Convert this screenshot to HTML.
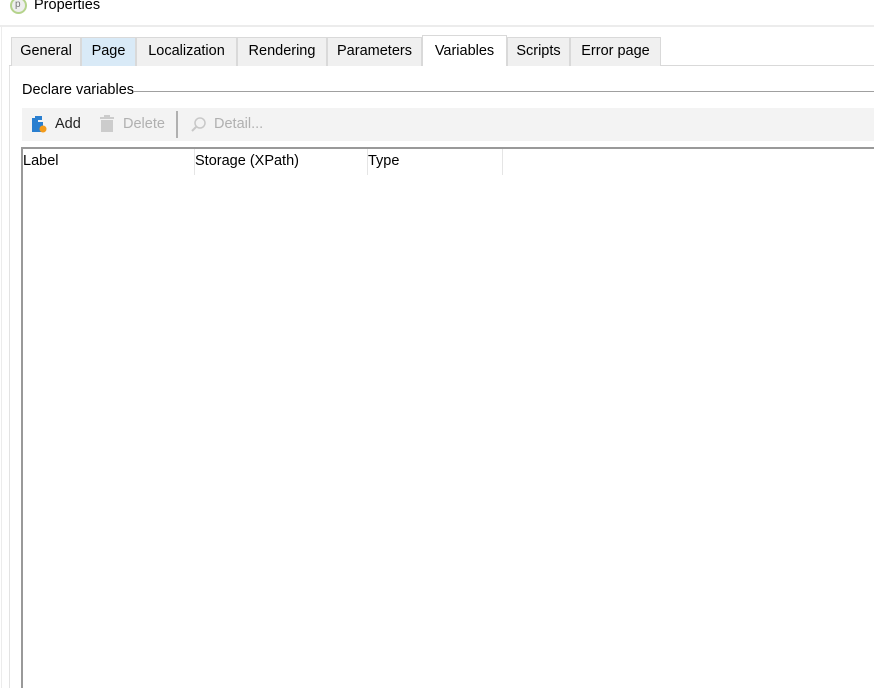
<!DOCTYPE html>
<html><head><style>
*{margin:0;padding:0;box-sizing:border-box}
body{width:874px;height:688px;background:#fff;font-family:"Liberation Sans",sans-serif;font-size:14.5px;color:#000;position:relative;overflow:hidden}
.a{position:absolute}
.tab{position:absolute;top:37px;height:29px;background:#f0f0f0;border:1px solid #d9d9d9;border-bottom:none;text-align:center;line-height:27px;font-size:14.5px}
</style></head><body>
<div class="a" style="left:10px;top:-3px;width:17px;height:17px;border-radius:50%;border:2px solid #b5d38c;background:#eee"></div>
<div class="a" style="left:15px;top:-1px;font-size:10px;color:#777">p</div>
<div class="a" style="left:34px;top:-3px">Properties</div>
<div class="a" style="left:0;top:25px;width:874px;height:2px;background:#ececec"></div>
<div class="a" style="left:1px;top:27px;width:1px;height:661px;background:#ececec"></div>
<div class="a" style="left:9px;top:65px;width:1px;height:623px;background:#e3e3e3"></div>
<div class="a" style="left:9px;top:65px;width:865px;height:1px;background:#d9d9d9"></div>
<div class="tab" style="left:11px;width:70px">General</div>
<div class="tab" style="left:81px;width:55px;background:#d9eaf7">Page</div>
<div class="tab" style="left:136px;width:101px">Localization</div>
<div class="tab" style="left:237px;width:90px">Rendering</div>
<div class="tab" style="left:327px;width:95px">Parameters</div>
<div class="tab" style="left:422px;top:35px;height:31px;width:85px;background:#fff;line-height:30px">Variables</div>
<div class="tab" style="left:507px;width:63px">Scripts</div>
<div class="tab" style="left:570px;width:91px">Error page</div>
<div class="a" style="left:22px;top:82px">Declare variables</div>
<div class="a" style="left:134px;top:91px;width:740px;height:1px;background:#a0a0a0"></div>
<div class="a" style="left:22px;top:108px;width:852px;height:33px;background:#f3f3f3"></div>
<svg class="a" style="left:30px;top:114px" width="20" height="20"><path d="M2 4h6v4h5v10H2z" fill="#2a7fd0"/><path d="M5 2h7v4H5z" fill="#2a7fd0"/><circle cx="13" cy="15" r="3.5" fill="#f39b1b"/></svg>
<div class="a" style="left:55px;top:116px;color:#222;font-weight:500">Add</div>
<svg class="a" style="left:98px;top:114px" width="18" height="20"><rect x="2" y="3" width="14" height="2" fill="#ccc"/><rect x="6" y="1" width="6" height="2" fill="#ccc"/><rect x="3" y="6" width="12" height="12" fill="#ccc"/></svg>
<div class="a" style="left:123px;top:116px;color:#b0b0b0">Delete</div>
<div class="a" style="left:176px;top:111px;width:2px;height:27px;background:#b0b0b0"></div>
<svg class="a" style="left:190px;top:115px" width="18" height="18"><circle cx="10" cy="8" r="5" fill="none" stroke="#c8c8c8" stroke-width="1.5"/><path d="M6 12l-4 4" stroke="#c8c8c8" stroke-width="2"/></svg>
<div class="a" style="left:214px;top:116px;color:#b0b0b0">Detail...</div>
<div class="a" style="left:21px;top:147px;width:853px;height:541px;border-left:2px solid #999;border-top:2px solid #999"></div>
<div class="a" style="left:23px;top:153px">Label</div>
<div class="a" style="left:195px;top:153px">Storage (XPath)</div>
<div class="a" style="left:368px;top:153px">Type</div>
<div class="a" style="left:194px;top:149px;width:1px;height:26px;background:#e5e5e5"></div>
<div class="a" style="left:367px;top:149px;width:1px;height:26px;background:#e5e5e5"></div>
<div class="a" style="left:502px;top:149px;width:1px;height:26px;background:#e5e5e5"></div>
</body></html>
